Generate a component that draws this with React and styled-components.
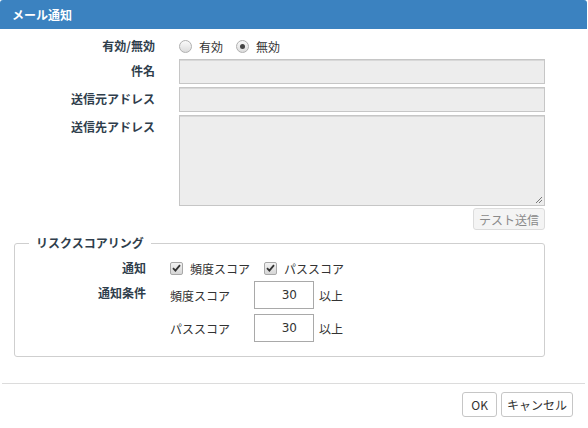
import styled, { createGlobalStyle } from 'styled-components';

const GlobalStyle = createGlobalStyle`
    html, body {
        margin: 0;
        padding: 0;
        background: #fff;
    }
    body {
        font-family: "Noto Sans CJK JP", "Noto Sans", sans-serif;
        font-size: 12px;
        color: #333;
    }
    * {
        box-sizing: border-box;
    }
`;

const Dialog = styled.div`
    width: 587px;
    height: 428px;
    display: flex;
    flex-direction: column;
    background: #fff;
`;

const Header = styled.div`
    height: 29px;
    flex: none;
    background: #3b82c0;
    border-radius: 3px 3px 0 0;
    color: #fff;
    font-weight: bold;
    font-size: 12px;
    display: flex;
    align-items: center;
    padding-left: 12px;
`;

const Body = styled.div`
    flex: 1;
    padding: 7px 42px 0 0;
    display: flex;
    flex-direction: column;
`;

const Row = styled.div`
    display: grid;
    grid-template-columns: ${p => p.$labelWidth || 155}px 1fr;
    column-gap: 24px;
    margin-bottom: ${p => p.$gap || 3}px;
    align-items: ${p => (p.$center ? 'center' : 'start')};
`;

const Label = styled.div`
    text-align: right;
    font-weight: bold;
    color: #2f3e4c;
    line-height: 16px;
    padding-top: ${p => p.$top || 0}px;
`;

const Options = styled.div`
    display: flex;
    align-items: center;
    height: 20px;
`;

const Option = styled.label`
    display: flex;
    align-items: center;
    gap: 7px;
    margin-right: ${p => p.$space || 13}px;
    color: #333;
`;

const Radio = styled.span`
    width: 13px;
    height: 13px;
    border-radius: 50%;
    border: 1px solid #b0b0b0;
    background: linear-gradient(#fafafa, #dcdcdc);
    display: flex;
    align-items: center;
    justify-content: center;

    &::after {
        content: '';
        width: 5px;
        height: 5px;
        border-radius: 50%;
        background: ${p => (p.$checked ? '#444' : 'transparent')};
    }
`;

const Check = styled.span`
    width: 13px;
    height: 13px;
    border-radius: 2px;
    border: 1px solid #a8a8a8;
    background: linear-gradient(#f2f2f2, #d6d6d6);
    display: flex;
    align-items: center;
    justify-content: center;
`;

const TextInput = styled.div`
    height: 25px;
    background: #ededed;
    border: 1px solid #c6c6c6;
    box-shadow: inset 0 1px 0 #d8d8d8;
`;

const TextArea = styled.div`
    position: relative;
    height: 91px;
    background: #ededed;
    border: 1px solid #c6c6c6;
    box-shadow: inset 0 1px 0 #d8d8d8;

    svg {
        position: absolute;
        right: 1px;
        bottom: 1px;
    }
`;

const ActionRow = styled.div`
    display: flex;
    justify-content: flex-end;
    margin-top: 2px;
`;

const GhostButton = styled.button`
    font-family: inherit;
    font-size: 12px;
    height: 22px;
    padding: 0 5px;
    color: #8a8a8a;
    background: #f4f4f4;
    border: 1px solid #dcdcdc;
    border-radius: 3px;
`;

const Fieldset = styled.fieldset`
    margin: 3px 0 0 14px;
    padding: 8px 0 13px 0;
    border: 1px solid #cfcfcf;
    border-radius: 3px;
    height: 121px;
`;

const Legend = styled.legend`
    margin-left: 14px;
    padding: 0 7px;
    font-weight: bold;
    color: #2f3e4c;
    line-height: 14px;
`;

const Condition = styled.div`
    display: grid;
    grid-template-columns: 79px 60px auto;
    align-items: center;
    column-gap: 5px;
    margin-bottom: ${p => p.$gap || 0}px;
`;

const NumberBox = styled.div`
    height: 28px;
    border: 1px solid #a9a9a9;
    display: flex;
    align-items: center;
    justify-content: flex-end;
    padding-right: 16px;
    font-family: "DejaVu Sans", "Noto Sans", sans-serif;
    font-size: 12px;
    color: #333;
`;

const Footer = styled.div`
    flex: none;
    border-top: 1px solid #dcdcdc;
    margin: 0 2px;
    padding: 8px 12px 0 0;
    height: 45px;
    display: flex;
    align-items: flex-start;
    justify-content: flex-end;
    gap: 4px;
`;

const FooterButton = styled.button`
    font-family: inherit;
    font-size: 12px;
    height: 25px;
    padding: 0 ${p => p.$pad || 10}px;
    color: #333;
    background: #fff;
    border: 1px solid #c6c6c6;
    border-radius: 3px;
`;

const CheckMark = () => (
    <svg width="9" height="8" viewBox="0 0 9 8">
        <path d="M1 4.2 L3.4 6.6 L8 1.2" fill="none" stroke="#333" strokeWidth="1.8" />
    </svg>
);

const App = () => (
    <>
        <GlobalStyle />
        <Dialog>
            <Header>メール通知</Header>
            <Body>
                <Row $center $gap={3}>
                    <Label>有効/無効</Label>
                    <Options>
                        <Option $space={13}>
                            <Radio />
                            有効
                        </Option>
                        <Option>
                            <Radio $checked />
                            無効
                        </Option>
                    </Options>
                </Row>
                <Row>
                    <Label $top={4}>件名</Label>
                    <TextInput />
                </Row>
                <Row>
                    <Label $top={4}>送信元アドレス</Label>
                    <TextInput />
                </Row>
                <Row $gap={0}>
                    <Label $top={4}>送信先アドレス</Label>
                    <div>
                        <TextArea>
                            <svg width="8" height="8" viewBox="0 0 8 8">
                                <path d="M7 1 L1 7 M7 4 L4 7" stroke="#777" strokeWidth="1" />
                            </svg>
                        </TextArea>
                        <ActionRow>
                            <GhostButton>テスト送信</GhostButton>
                        </ActionRow>
                    </div>
                </Row>
                <Fieldset>
                    <Legend>リスクスコアリング</Legend>
                    <Row $labelWidth={131} $center $gap={3}>
                        <Label>通知</Label>
                        <Options>
                            <Option $space={14}>
                                <Check>
                                    <CheckMark />
                                </Check>
                                頻度スコア
                            </Option>
                            <Option>
                                <Check>
                                    <CheckMark />
                                </Check>
                                パススコア
                            </Option>
                        </Options>
                    </Row>
                    <Row $labelWidth={131} $gap={0}>
                        <Label $top={4}>通知条件</Label>
                        <div>
                            <Condition $gap={5}>
                                <span>頻度スコア</span>
                                <NumberBox>30</NumberBox>
                                <span>以上</span>
                            </Condition>
                            <Condition>
                                <span>パススコア</span>
                                <NumberBox>30</NumberBox>
                                <span>以上</span>
                            </Condition>
                        </div>
                    </Row>
                </Fieldset>
            </Body>
            <Footer>
                <FooterButton $pad={8}>OK</FooterButton>
                <FooterButton $pad={5}>キャンセル</FooterButton>
            </Footer>
        </Dialog>
    </>
);

export default App;
